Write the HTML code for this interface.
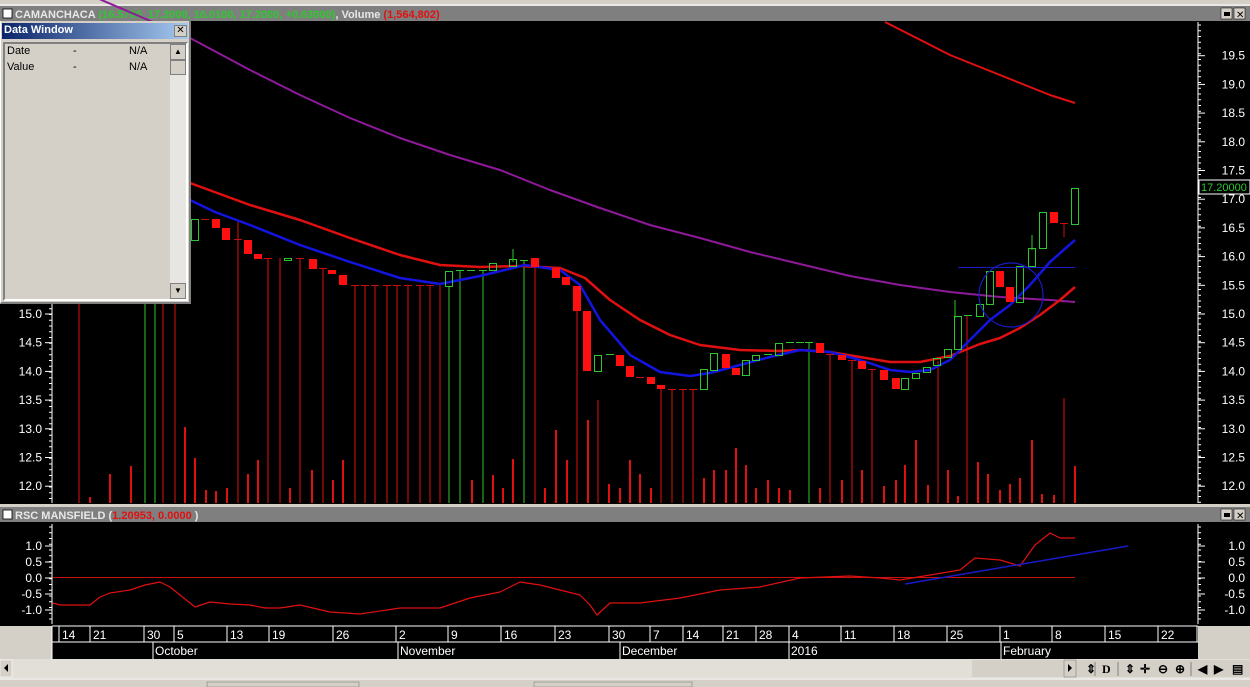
<!DOCTYPE html>
<html><head><meta charset="utf-8">
<style>
*{margin:0;padding:0;box-sizing:border-box}
body{width:1250px;height:687px;background:#d4d0c8;overflow:hidden;font-family:"Liberation Sans",sans-serif;position:relative}
.t{position:absolute;font-size:11px;white-space:nowrap}
</style></head><body>
<svg id="s" width="1250" height="687" style="position:absolute;left:0;top:0" font-family="Liberation Sans, sans-serif">
<rect x="0" y="0" width="1250" height="6" fill="#d4d0c8"/>
<line x1="0" y1="5" x2="1250" y2="5" fill="none" stroke="#fff"/>
<rect x="0" y="6" width="1250" height="15" fill="#7f7f7f"/>
<rect x="3" y="9" width="9" height="9" fill="#fff" stroke="#000" stroke-width="0.8"/>
<text x="15" y="18" font-size="11" font-weight="bold" fill="#e8e8e8">CAMANCHACA <tspan fill="#2ec82e">(16.5700, 17.2000, 16.0100, 17.2000, +0.63000)</tspan>, Volume <tspan fill="#e01010">(1,564,802)</tspan></text>
<rect x="1221" y="8" width="11" height="11" fill="#d4d0c8" stroke="#000" stroke-width="0.5"/><rect x="1224" y="12" width="6" height="4" fill="#000"/>
<rect x="1234" y="8" width="11" height="11" fill="#d4d0c8" stroke="#000" stroke-width="0.5"/><text x="1236" y="18" font-size="10">✕</text>
<rect x="0" y="21" width="1250" height="483" fill="#000"/>
<rect x="0" y="504" width="1250" height="3" fill="#d4d0c8"/>
<rect x="0" y="507" width="1250" height="15" fill="#7f7f7f"/>
<rect x="3" y="510" width="9" height="9" fill="#fff" stroke="#000" stroke-width="0.8"/>
<text x="15" y="519" font-size="11" font-weight="bold" fill="#e8e8e8">RSC MANSFIELD (<tspan fill="#e01010">1.20953, 0.0000</tspan> )</text>
<rect x="1221" y="509" width="11" height="11" fill="#d4d0c8" stroke="#000" stroke-width="0.5"/><rect x="1224" y="513" width="6" height="4" fill="#000"/>
<rect x="1234" y="509" width="11" height="11" fill="#d4d0c8" stroke="#000" stroke-width="0.5"/><text x="1236" y="519" font-size="10">✕</text>
<rect x="0" y="522" width="1250" height="104" fill="#000"/>
<rect x="52" y="626" width="1146" height="33" fill="#000"/>
<line x1="52" y1="626" x2="1198" y2="626" stroke="#fff"/>
<line x1="52" y1="642" x2="1198" y2="642" stroke="#fff"/>
<line x1="52" y1="626" x2="52" y2="659" stroke="#fff"/>
<line x1="1197" y1="626" x2="1197" y2="642" stroke="#fff"/>
<rect x="0" y="659" width="1250" height="19" fill="#e2ded8"/>
<rect x="0" y="660" width="12" height="17" fill="#d4d0c8" stroke="#fff" stroke-width="0.6"/><path d="M8 664 L4 668 L8 672Z" fill="#000"/>
<rect x="972" y="660" width="188" height="17" fill="#d4d0c8"/>
<rect x="1064" y="660" width="12" height="17" fill="#d4d0c8" stroke="#808080" stroke-width="0.6"/><path d="M1068 664 L1072 668 L1068 672Z" fill="#000"/>
<rect x="1078" y="660" width="172" height="17" fill="#d4d0c8"/>
<g font-size="12" font-weight="bold" fill="#000">
<text x="1086" y="673">⇕</text><text x="1102" y="673" font-family="Liberation Serif">D</text>
<text x="1125" y="673">⇕</text><text x="1140" y="673">✛</text><text x="1158" y="673">⊖</text><text x="1175" y="673">⊕</text>
<text x="1198" y="673">◀</text><text x="1214" y="673">▶</text><text x="1232" y="673">▤</text></g>
<g stroke="#808080"><line x1="1095" y1="662" x2="1095" y2="676"/><line x1="1118" y1="662" x2="1118" y2="676"/><line x1="1191" y1="662" x2="1191" y2="676"/></g>
<rect x="0" y="678" width="1250" height="9" fill="#d4d0c8"/>
<line x1="0" y1="679" x2="1250" y2="679" stroke="#fff"/>
<rect x="207" y="682" width="152" height="5" fill="#d4d0c8" stroke="#808080" stroke-width="0.6"/>
<rect x="534" y="682" width="158" height="5" fill="#d4d0c8" stroke="#808080" stroke-width="0.6"/>
<g id="chart"></g>
</svg>
<div style="position:absolute;left:0;top:21px;width:191px;height:283px;background:#d4d0c8;border-right:2px solid #808080;border-bottom:2px solid #808080;border-left:1px solid #fff">
 <div style="position:absolute;left:1px;top:2px;width:186px;height:16px;background:linear-gradient(90deg,#0a246a,#a6caf0)"></div>
 <div class="t" style="left:3px;top:3px;color:#fff;font-weight:bold">Data Window</div>
 <div style="position:absolute;left:173px;top:4px;width:13px;height:12px;background:#d4d0c8;border:1px solid #808080;font-size:10px;line-height:10px;text-align:center">✕</div>
 <div style="position:absolute;left:2px;top:21px;width:185px;height:259px;background:#d4d0c8;border:2px solid #808080;border-right-color:#fff;border-bottom-color:#fff"></div>
 <div class="t" style="left:6px;top:24px">Date</div><div class="t" style="left:72px;top:24px">-</div><div class="t" style="left:128px;top:24px">N/A</div>
 <div class="t" style="left:6px;top:40px">Value</div><div class="t" style="left:72px;top:40px">-</div><div class="t" style="left:128px;top:40px">N/A</div>
 <div style="position:absolute;left:169px;top:23px;width:16px;height:255px;background:#e8e6e2"></div>
 <div style="position:absolute;left:169px;top:23px;width:16px;height:16px;background:#d4d0c8;border:1px solid #808080;font-size:8px;text-align:center;line-height:14px">▲</div>
 <div style="position:absolute;left:169px;top:39px;width:16px;height:15px;background:#d4d0c8;border:1px solid #808080"></div>
 <div style="position:absolute;left:169px;top:262px;width:16px;height:16px;background:#d4d0c8;border:1px solid #808080;font-size:8px;text-align:center;line-height:14px">▼</div>
</div>
<script>
const NS="http://www.w3.org/2000/svg",g=document.getElementById('chart');
function el(t,a,txt){const e=document.createElementNS(NS,t);for(const k in a)e.setAttribute(k,a[k]);if(txt)e.textContent=txt;g.appendChild(e);return e}
const vol=[[79,300,'r'],[90,497,'r'],[110,474,'r'],[131,466,'r'],[145,300,'g'],[155,300,'g'],[163,300,'r'],[175,300,'r'],[185,427,'r'],[195,458,'r'],[206,490,'r'],[216,491,'r'],[227,488,'r'],[238,220,'r'],[248,474,'r'],[258,460,'r'],[268,258,'r'],[280,258,'r'],[290,488,'r'],[300,258,'r'],[312,470,'r'],[323,268,'r'],[333,480,'r'],[343,460,'r'],[355,285,'r'],[365,285,'r'],[375,285,'r'],[387,285,'r'],[397,285,'r'],[408,285,'r'],[420,285,'r'],[430,285,'r'],[440,285,'r'],[449,286,'g'],[460,270,'g'],[472,480,'r'],[483,270,'g'],[493,475,'r'],[503,488,'r'],[513,459,'r'],[524,260,'g'],[535,258,'r'],[545,488,'r'],[556,430,'r'],[567,460,'r'],[577,311,'r'],[588,420,'r'],[598,400,'r'],[609,484,'r'],[620,488,'r'],[630,460,'r'],[640,474,'r'],[651,488,'r'],[661,389,'r'],[672,389,'r'],[683,389,'r'],[693,389,'r'],[704,478,'r'],[714,470,'r'],[726,470,'r'],[736,448,'r'],[746,465,'r'],[756,488,'r'],[768,480,'r'],[779,488,'r'],[790,490,'r'],[809,342,'g'],[820,488,'r'],[830,354,'r'],[842,480,'r'],[852,360,'r'],[862,470,'r'],[872,369,'r'],[884,486,'r'],[896,480,'r'],[905,465,'r'],[916,440,'r'],[928,485,'r'],[938,361,'r'],[948,470,'r'],[958,496,'r'],[967,315,'r'],[978,462,'r'],[988,474,'r'],[1000,490,'r'],[1010,484,'r'],[1020,478,'r'],[1032,440,'r'],[1042,494,'r'],[1054,495,'r'],[1064,398,'r'],[1075,466,'r']];
vol.forEach(v=>el('line',{x1:v[0],y1:v[1],x2:v[0],y2:503,stroke:v[2]=='r'?'#e01010':'#2ec82e','stroke-width':v[1]>400?2:1}));
function pl(pts,c,w){el('polyline',{points:pts.map(p=>p.join(',')).join(' '),fill:'none',stroke:c,'stroke-width':w,'stroke-linejoin':'round'})}
pl([[55,-20],[190,38],[250,70],[300,95],[350,118],[400,138],[450,155],[500,170],[550,190],[600,208],[650,225],[700,238],[750,252],[800,264],[850,276],[900,285],[950,292],[1000,297],[1050,300],[1075,302]],'#8e1a9a',2);
pl([[885,22],[950,55],[1000,75],[1050,95],[1075,103]],'#e01010',2);
pl([[190,183],[250,205],[300,220],[350,238],[400,255],[440,265],[480,267],[520,266],[560,268],[585,278],[610,300],[640,320],[670,335],[700,345],[740,350],[780,351],[800,350],[830,352],[860,357],[890,362],[920,362],[950,356],[980,344],[1000,338],[1020,328],[1040,315],[1060,300],[1075,287]],'#e01010',2.5);
pl([[190,200],[215,212],[250,225],[300,245],[350,262],[400,278],[440,284],[480,276],[525,265],[560,270],[580,285],[600,320],[630,355],[660,372],[690,376],[710,373],[740,365],[770,357],[800,350],[830,352],[860,360],[890,370],[910,372],[930,370],[950,360],[970,340],[990,320],[1010,305],[1030,285],[1050,262],[1075,240]],'#1414e0',2.5);
const cd=[[195,219,240,'g'],[205,219,219,'r'],[216,219,228,'r'],[226,228,240,'r'],[238,239,239,'r'],[248,240,254,'r'],[258,254,259,'r'],[268,258,258,'r'],[288,258,260,'g'],[300,258,258,'r'],[313,259,269,'r'],[323,268,268,'r'],[332,270,274,'r'],[343,275,285,'r'],[355,285,285,'r'],[365,285,285,'r'],[375,285,285,'r'],[387,285,285,'r'],[397,285,285,'r'],[408,285,285,'r'],[420,285,285,'r'],[430,285,285,'r'],[449,271,286,'g'],[460,270,270,'g'],[471,270,270,'g'],[483,270,270,'g'],[493,263,270,'g'],[513,259,266,'g'],[524,260,260,'g'],[535,258,267,'r'],[556,268,278,'r'],[566,277,285,'r'],[577,286,311,'r'],[587,311,371,'r'],[598,355,371,'g'],[610,354,354,'g'],[620,355,366,'r'],[630,366,377,'r'],[640,377,377,'r'],[651,377,384,'r'],[661,385,389,'r'],[672,389,389,'r'],[683,389,389,'r'],[693,389,389,'r'],[704,369,389,'g'],[714,353,370,'g'],[726,354,368,'r'],[736,368,375,'r'],[746,360,375,'g'],[756,355,360,'g'],[768,354,354,'g'],[779,343,355,'g'],[790,342,342,'g'],[800,342,342,'g'],[809,342,342,'g'],[820,343,353,'r'],[830,354,354,'r'],[842,355,360,'r'],[852,360,360,'r'],[862,361,369,'r'],[872,369,369,'r'],[884,370,380,'r'],[896,378,389,'r'],[905,378,389,'g'],[916,373,378,'g'],[927,367,372,'g'],[937,358,365,'g'],[948,349,357,'g'],[958,316,349,'g'],[968,315,315,'g'],[980,304,316,'g'],[990,271,304,'g'],[1000,271,287,'r'],[1010,287,302,'r'],[1020,266,302,'g'],[1032,248,266,'g'],[1043,212,248,'g'],[1054,212,223,'r'],[1064,223,223,'r'],[1075,188,224,'g']];
cd.forEach(c=>{const col=c[3]=='r'?'#ff1010':'#2ec82e';
 if(c[1]==c[2]) el('line',{x1:c[0]-4,y1:c[1]+.5,x2:c[0]+4,y2:c[1]+.5,stroke:c[3]=='r'?'#c81010':'#2ec82e'});
 else if(c[3]=='r') el('rect',{x:c[0]-4,y:c[1],width:8,height:c[2]-c[1],fill:col});
 else el('rect',{x:c[0]-3.5,y:c[1]+.5,width:7,height:c[2]-c[1],fill:'none',stroke:col});});
[[1064,223,237,'#c81010'],[1032,235,250,'#2ec82e'],[955,300,318,'#2ec82e'],[513,249,262,'#2ec82e'],[1020,266,268,'#2ec82e']].forEach(w=>el('line',{x1:w[0],y1:w[1],x2:w[0],y2:w[2],stroke:w[3]}));
el('line',{x1:958,y1:267.5,x2:1075,y2:267.5,stroke:'#1a1ac8'});
el('circle',{cx:1011,cy:295,r:32,fill:'none',stroke:'#1a1ac8','stroke-width':1.2});
function axis(x,y1,y2,lines,left){el('line',{x1:x,y1:y1,x2:x,y2:y2,stroke:'#fff'});
 for(let y=y1+3;y<y2;y+=5.75)el('line',{x1:x,y1:y,x2:left?x-3:x+3,y2:y,stroke:'#fff'});
 lines.forEach(l=>{el('line',{x1:x,y1:l[0],x2:left?x-7:x+7,y2:l[0],stroke:'#fff'});el('text',{x:left?x-10:1245,y:l[0]+4,'font-size':12,fill:'#fff','text-anchor':'end'},l[1])})}
let main=[];for(let p=19.5;p>=11.99;p-=0.5)main.push([314-(p-15)*57.4,p.toFixed(1)]);
axis(1198,22,503,main,false);
axis(52,300,503,main.filter(m=>m[0]>300),true);
const low=[[546,'1.0'],[562,'0.5'],[578,'0.0'],[594,'-0.5'],[610,'-1.0']];
axis(1198,524,624,low,false);axis(52,524,624,low,true);
el('rect',{x:1199,y:180,width:51,height:14,fill:'#000',stroke:'#fff'});
el('text',{x:1201,y:191,'font-size':11,fill:'#2ec82e'},'17.20000');
el('line',{x1:53,y1:577.5,x2:1075,y2:577.5,stroke:'#c81010'});
pl([[53,603],[60,605],[90,605],[100,597],[110,593],[130,590],[145,585],[160,582],[170,587],[180,595],[195,607],[210,602],[230,604],[250,605],[265,608],[280,608],[300,605],[330,612],[360,614],[400,608],[440,608],[470,598],[500,592],[520,582],[540,585],[560,590],[580,595],[590,605],[597,615],[610,603],[640,603],[680,598],[720,590],[760,587],[800,578],[850,576],[880,578],[900,580],[930,575],[960,570],[975,558],[1000,560],[1020,566],[1035,545],[1050,533],[1060,538],[1075,538]],'#e01010',1.2);
el('line',{x1:905,y1:584,x2:1128,y2:546,stroke:'#1a1ac8','stroke-width':1.5});
const d=[[60,'14'],[91,'21'],[145,'30'],[175,'5'],[228,'13'],[270,'19'],[334,'26'],[397,'2'],[449,'9'],[502,'16'],[556,'23'],[610,'30'],[651,'7'],[684,'14'],[724,'21'],[757,'28'],[790,'4'],[842,'11'],[895,'18'],[948,'25'],[1001,'1'],[1053,'8'],[1106,'15'],[1159,'22']];
d.forEach(a=>{el('line',{x1:a[0]-1,y1:626,x2:a[0]-1,y2:642,stroke:'#fff'});el('text',{x:a[0]+2,y:639,'font-size':12,fill:'#fff'},a[1])});
[[153,'October'],[398,'November'],[620,'December'],[789,'2016'],[1001,'February']].forEach(a=>{el('line',{x1:a[0],y1:642,x2:a[0],y2:659,stroke:'#fff'});el('text',{x:a[0]+2,y:655,'font-size':12,fill:'#fff'},a[1])});
</script>
</body></html>
